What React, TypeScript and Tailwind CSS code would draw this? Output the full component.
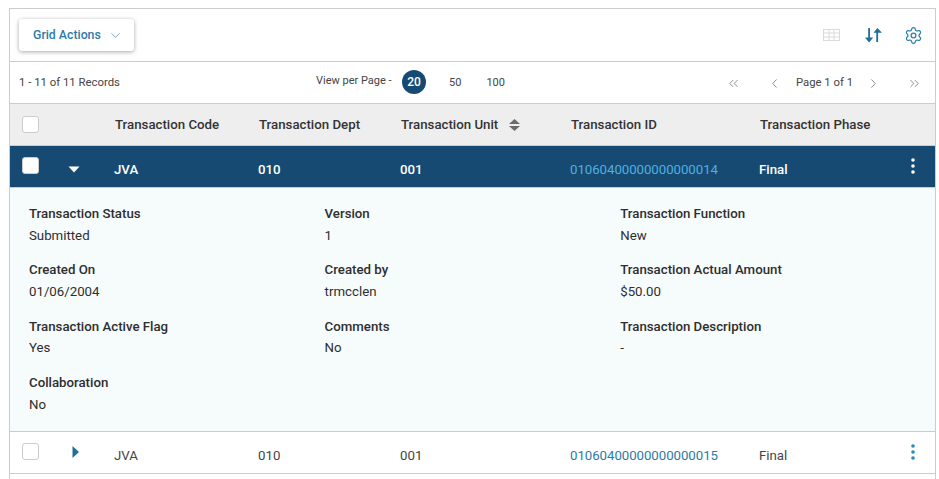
import React from "react";
import { ChevronDown, ChevronLeft, ChevronRight, ChevronsLeft, ChevronsRight, Settings } from "lucide-react";

const font = { fontFamily: "Roboto, sans-serif" };

function Box({ className = "" }: { className?: string }) {
  return <span className={"block w-[17px] h-[17px] rounded-[3px] border bg-white " + className} />;
}

function Kebab({ color }: { color: string }) {
  return (
    <svg width="6" height="18" viewBox="0 0 6 18" fill={color}>
      <circle cx="3" cy="3" r="1.8" />
      <circle cx="3" cy="9" r="1.8" />
      <circle cx="3" cy="15" r="1.8" />
    </svg>
  );
}

const cols = "grid grid-cols-[105px_144px_142px_170px_189px_1fr] items-center";

function Field({ label, value, tight = false }: { label: string; value: string; tight?: boolean }) {
  return (
    <div className="h-[56.33px]">
      <div className="text-[13.25px] leading-[17px] font-medium text-[#2e2e2e]">{label}</div>
      <div className={(tight ? "mt-[4px]" : "mt-[5px]") + " text-[13.25px] leading-[17px] text-[#2e2e2e]"}>{value}</div>
    </div>
  );
}

export default function App() {
  return (
    <div className="w-[939px] h-[479px] overflow-hidden bg-white pt-2 pl-[9px] pr-[3px]" style={font}>
      <div className="h-[471px] border border-b-0 border-[#cccccc] overflow-hidden">
        <div className="h-[53px] flex items-center justify-between pl-[9px] pr-[12px] border-b border-[#cccccc]">
          <button className="w-[115px] h-[32px] flex items-center pl-[14px] rounded-[3px] bg-white shadow-[0_1px_4px_rgba(0,0,0,0.35)] text-[12.3px] font-medium text-[#2c7ba6]">
            Grid Actions
            <ChevronDown className="ml-[7px] w-[15px] h-[15px] text-[#5f8ba6]" strokeWidth={1.25} />
          </button>
          <div className="flex items-center">
            <svg width="17" height="12" viewBox="0 0 17 12" fill="none" stroke="#dcd9dc" strokeWidth="1">
              <rect x="0.5" y="0.5" width="16" height="11" />
              <path d="M0.5 4h16M0.5 8h16M6 .5v11M11 .5v11" />
            </svg>
            <svg className="ml-[25px]" width="17" height="15" viewBox="0 0 17 15" fill="#1f6f9c">
              <path d="M3.2 0h1.8v9.4H8.2L4.1 14.6 0 9.4h3.2z" />
              <path d="M13.1 14h-1.8V4.8H8.6L12.4 0 17 4.8h-3.9z" />
            </svg>
            <Settings className="ml-[22px] w-[19px] h-[19px] text-[#2b7fab]" strokeWidth={1.6} />
          </div>
        </div>

        <div className="relative h-[42px] flex items-center justify-between pt-[1px] pl-[9px] pr-[13px] border-b border-[#cccccc] text-[11.35px] text-[#444]">
          <span>1 - 11 of 11 Records</span>
          <div className="absolute left-[306px] top-[8px] flex items-center">
            <span className="w-[86px] -mt-[2px] text-[11px]">View per Page -</span>
            <span className="w-[24px] h-[24px] rounded-full bg-[#174a72] text-white font-medium text-[12px] flex items-center justify-center">20</span>
            <span className="ml-[23px] mt-[2px] text-[11px]">50</span>
            <span className="ml-[25px] mt-[2px] text-[11px]">100</span>
          </div>
          <div className="flex items-center text-[#6f6d70]">
            <ChevronsLeft className="w-[15px] h-[15px]" strokeWidth={1.25} />
            <ChevronLeft className="ml-[26px] w-[15px] h-[15px]" strokeWidth={1.25} />
            <span className="ml-[14px] mt-[1px] text-[#444] text-[11.3px]">Page 1 of 1</span>
            <ChevronRight className="ml-[13px] w-[15px] h-[15px]" strokeWidth={1.25} />
            <ChevronsRight className="ml-[26px] w-[15px] h-[15px]" strokeWidth={1.25} />
          </div>
        </div>

        <div className={cols + " h-[42px] bg-[#eeeeee] border-b border-[#cccccc] text-[13.25px] font-medium text-[#333]"}>
          <div className="pl-[12px]"><Box className="border-[#cccccc]" /></div>
          <div className="pt-[1px]">Transaction Code</div>
          <div className="pt-[1px]">Transaction Dept</div>
          <div className="pt-[1px] flex items-center gap-[11px]">
            Transaction Unit
            <svg width="11" height="12" viewBox="0 0 11 12" fill="#6b6b6b">
              <path d="M5.5 0L11 5H0z" />
              <path d="M5.5 12L0 7h11z" />
            </svg>
          </div>
          <div className="pt-[1px]">Transaction ID</div>
          <div className="pt-[1px]">Transaction Phase</div>
        </div>

        <div className="h-[42px] bg-[#174a72] text-white text-[13.25px] font-medium relative border-b border-[#cccccc]">
          <div className={cols + " h-full"}>
            <div className="flex items-center pl-[12px]">
              <Box className="border-[#cccccc] -mt-[3px]" />
              <svg className="ml-[29px] mt-[6px]" width="12" height="7" viewBox="0 0 12 7" fill="#ffffff"><path d="M0.5 0.5h11L6 6.5z" /></svg>
            </div>
            <div className="-ml-px pt-[6px]">JVA</div>
            <div className="-ml-px pt-[6px]">010</div>
            <div className="-ml-px pt-[6px]">001</div>
            <div className="-ml-px pt-[6px] font-normal text-[#4fb0e0] tracking-[-0.05px]">01060400000000000014</div>
            <div className="-ml-px pt-[6px]">Final</div>
          </div>
          <span className="absolute right-[19px] top-[11px]"><Kebab color="#ffffff" /></span>
        </div>

        <div className="h-[244px] bg-[#f6fbfc] border-b border-[#cccccc] pt-[17px] pl-[19px] grid grid-cols-[295.6px_295.6px_1fr] content-start">
          <Field label="Transaction Status" value="Submitted" />
          <Field label="Version" value="1" />
          <Field label="Transaction Function" value="New" />
          <Field label="Created On" value="01/06/2004" />
          <Field label="Created by" value="trmcclen" />
          <Field label="Transaction Actual Amount" value="$50.00" />
          <Field label="Transaction Active Flag" value="Yes" tight />
          <Field label="Comments" value="No" tight />
          <Field label="Transaction Description" value="-" tight />
          <Field label="Collaboration" value="No" />
        </div>

        <div className="h-[42px] bg-white text-[13.25px] text-[#444] relative border-b border-[#cccccc]">
          <div className={cols + " h-full"}>
            <div className="flex items-center pl-[12px]">
              <Box className="border-[#cccccc] -mt-[3px]" />
              <svg className="ml-[33px] -mt-[1px]" width="7" height="12" viewBox="0 0 7 12" fill="#1f6f9c"><path d="M0.5 0v12L7 6z" /></svg>
            </div>
            <div className="-ml-px pt-[6px]">JVA</div>
            <div className="-ml-px pt-[6px]">010</div>
            <div className="-ml-px pt-[6px]">001</div>
            <div className="-ml-px pt-[6px] text-[#2c7ba6] tracking-[-0.05px]">01060400000000000015</div>
            <div className="-ml-px pt-[6px]">Final</div>
          </div>
          <span className="absolute right-[19px] top-[11px]"><Kebab color="#2b88bb" /></span>
        </div>
      </div>
    </div>
  );
}
